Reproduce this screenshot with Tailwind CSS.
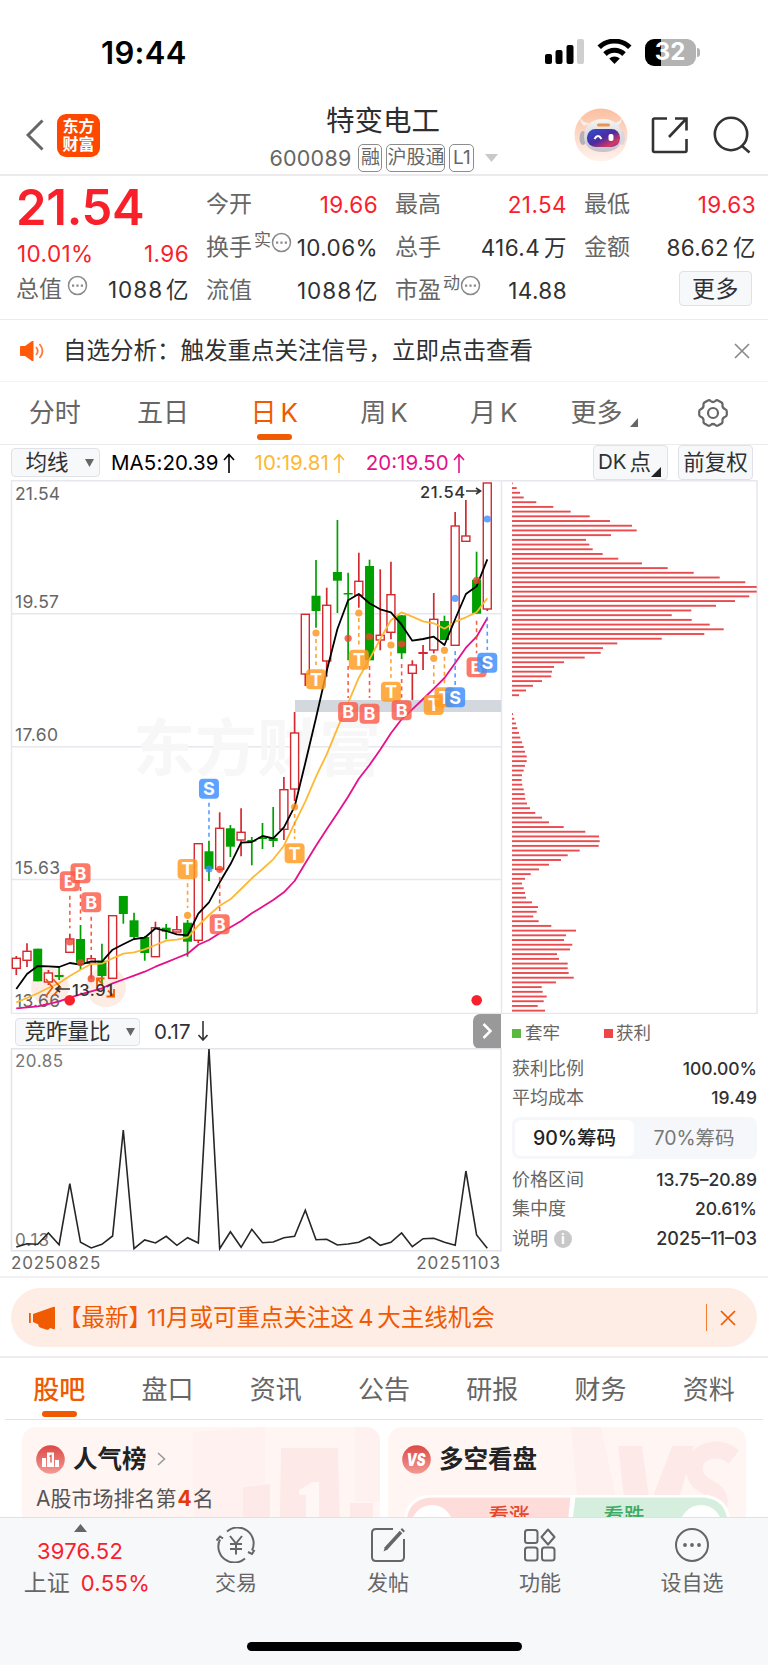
<!DOCTYPE html>
<html lang="zh-CN">
<head>
  <meta charset="UTF-8">
  <meta name="viewport" content="width=device-width, initial-scale=1.0">
  <script src="https://cdn.jsdelivr.net/npm/@tailwindcss/browser@4"></script>
  <title>特变电工 600089</title>
</head>
<body class="bg-white">
  <div class="w-[768px] h-[1665px] overflow-hidden flex flex-col bg-white text-[#303133] font-['Inter','Noto_Sans_CJK_SC',sans-serif]">

    <!-- Status bar -->
    <div class="h-[104px] shrink-0 flex items-center justify-between pl-[101px] pr-[68px]">
      <span class="text-[31px] leading-none font-semibold text-black tracking-[0.3px]">19:44</span>
      <div class="flex items-center gap-[13px]">
        <svg class="w-[39px] h-[26px]" viewBox="0 0 39 26">
          <rect x="0" y="15" width="7" height="10" rx="2"/>
          <rect x="10.500" y="11" width="7" height="14" rx="2"/>
          <rect x="21.500" y="6" width="7" height="19" rx="2"/>
          <rect x="32" y="0" width="7" height="25" rx="2" fill="#cfcfcf"/>
        </svg>
        <svg class="w-[35px] h-[26px]" viewBox="0 0 35 26" fill="none" stroke="#000" stroke-width="5">
          <path d="M2.200 8.300a22 22 0 0 1 30.600 0"/>
          <path d="M8 15.100a13.600 13.600 0 0 1 19 0"/>
          <path d="M17.500 25l-5.300-5.400a7.600 7.600 0 0 1 10.600 0z" fill="#000" stroke="none"/>
        </svg>
        <div class="flex items-center gap-[1.500px]">
          <div class="w-[51px] h-[27px] rounded-[9px] flex items-center justify-center bg-linear-to-r from-black from-32% to-[#b3b3b3] to-32%">
            <span class="text-[24px] leading-none font-bold text-white">32</span>
          </div>
          <div class="w-[3px] h-[9px] rounded-r-full bg-[#b3b3b3]"></div>
        </div>
      </div>
    </div>

    <!-- Header -->
    <header class="h-[72px] shrink-0 flex justify-between border-b-2 border-[#ebebed]">
      <div class="flex items-center w-[250px] pl-[26px] gap-[13px] pb-[8px]">
        <svg class="w-[18px] h-[32px]" viewBox="0 0 18 32" fill="none" stroke="#666" stroke-width="3"><path d="M16.500 1.500L2 16l14.500 14.500"/></svg>
        <div class="w-[43px] h-[43px] rounded-[9px] bg-[#fe4800] text-white text-[16px] leading-[18px] font-bold flex flex-col items-center justify-center">
          <span>东方</span><span>财富</span>
        </div>
      </div>
      <div class="w-[268px] flex flex-col items-center pt-px">
        <h1 class="text-[28.500px] leading-[32px] text-[#2e2e2e] -ml-[2px]">特变电工</h1>
        <div class="flex items-center mt-[7px] text-[#666]">
          <span class="text-[21.500px] leading-[28px] mr-[7px] tracking-[0.200px]">600089</span>
          <div class="flex gap-[4px] text-[19px] leading-[26px]">
            <span class="border border-[#8c8c8c] rounded-[5px] w-[24px] flex justify-center">融</span>
            <span class="border border-[#8c8c8c] rounded-[5px] w-[59px] flex justify-center">沪股通</span>
            <span class="border border-[#8c8c8c] rounded-[5px] w-[25px] flex justify-center">L1</span>
          </div>
          <svg class="w-[13px] h-[8px] ml-[11px]" viewBox="0 0 13 8"><path d="M0 0h13L6.500 8z" fill="#c9c9c9"/></svg>
        </div>
      </div>
      <div class="w-[250px] flex items-center justify-end pr-[17px] pb-[8px]">
        <svg class="w-[54px] h-[54px] mr-[23px]" viewBox="0 0 54 54">
          <defs>
            <linearGradient id="halo" x1="0" y1="0" x2="0" y2="1"><stop offset="0" stop-color="#fcbfa0"/><stop offset="1" stop-color="#fff3ee"/></linearGradient>
            <linearGradient id="visor" x1="0" y1="0" x2="1" y2="1"><stop offset="0" stop-color="#2d50d2"/><stop offset=".5" stop-color="#4c2ba0"/><stop offset=".8" stop-color="#d8395f"/><stop offset="1" stop-color="#5a38c8"/></linearGradient>
            <linearGradient id="shell" x1="0" y1="0" x2="0" y2="1"><stop offset="0" stop-color="#f7f4f4"/><stop offset="1" stop-color="#c3c1cc"/></linearGradient>
          </defs>
          <circle cx="27" cy="27" r="26.500" fill="url(#halo)"/>
          <path d="M6 9q0 7 5 9l5-3q-8 0-10-6zM48 9q0 7-5 9l-5-3q8 0 10-6z" fill="#f3efef"/>
          <ellipse cx="9" cy="30" rx="3.500" ry="7" fill="#b3b0b8"/>
          <ellipse cx="48" cy="30" rx="3" ry="7" fill="#d9d6dc"/>
          <path d="M29 11c13 0 19 8 19 18 0 9-7 15-19 15S10 38 10 29c0-10 6-18 19-18z" fill="url(#shell)"/>
          <rect x="13" y="21" width="33" height="18" rx="8.500" fill="url(#visor)"/>
          <rect x="23" y="15.500" width="13" height="3" rx="1.500" fill="#e8954e"/>
          <path d="M20.500 31q3.500-6 7 0" fill="none" stroke="#fff" stroke-width="2"/>
          <rect x="34.500" y="26" width="5" height="7" rx="2" fill="#fff"/>
        </svg>
        <svg class="w-[38px] h-[38px] mr-[24px]" viewBox="0 0 38 38" fill="none" stroke="#333" stroke-width="2.600">
          <path d="M16 2.500H3.500Q2 2.500 2 4v30.500Q2 36 3.500 36H34q1.500 0 1.500-1.500V23"/>
          <path d="M24 2.500h11.500v12M35 3L18 21"/>
        </svg>
        <svg class="w-[38px] h-[38px]" viewBox="0 0 38 38" fill="none" stroke="#333" stroke-width="2.600">
          <circle cx="18" cy="18" r="16.200"/><path d="M29 30l7.500 6.500"/>
        </svg>
      </div>
    </header>

    <!-- Quote figures -->
    <section class="h-[144px] shrink-0 border-b border-[#ebebed] flex gap-[17px] pl-[17px] pr-[11px] text-[22.500px] leading-[43px] tracking-[0.400px]">
      <div class="w-[172px]">
        <div class="text-[49px] leading-[49px] pt-[7px] h-[62px] font-semibold text-[#f8212b] tracking-[-0.300px] -ml-px">21.54</div>
        <div class="flex justify-between leading-[31px] text-[#f8212b] h-[31px]"><span>10.01%</span><span>1.96</span></div>
        <div class="flex justify-between h-[43px] -mt-px">
          <span class="flex text-[23px] tracking-normal text-[#666] -ml-px">总值<svg class="w-[21px] h-[21px] ml-[5px] mt-[7px]" viewBox="0 0 21 21"><circle cx="10.500" cy="10.500" r="9" fill="none" stroke="#8a8a8a" stroke-width="1.500"/><path d="M5 9.500h2.200v2.200H5zM9.400 9.500h2.200v2.200H9.400zM13.800 9.500H16v2.200h-2.200z" fill="#8a8a8a"/></svg></span>
          <span class="flex gap-[3px]"><span class="tracking-[1px]">1088</span><span>亿</span></span>
        </div>
      </div>
      <div class="w-[172px] pt-[7px]">
        <div class="flex justify-between h-[43px]"><span class="text-[23px] tracking-normal text-[#666]">今开</span><span class="text-[#f8212b]">19.66</span></div>
        <div class="flex justify-between h-[43px]">
          <span class="flex text-[23px] tracking-normal text-[#666]">换手<span class="text-[17px] leading-[28px] ml-[2px]">实</span><svg class="w-[21px] h-[21px] mt-[6px]" viewBox="0 0 21 21"><circle cx="10.500" cy="10.500" r="9" fill="none" stroke="#8a8a8a" stroke-width="1.500"/><path d="M5 9.500h2.200v2.200H5zM9.400 9.500h2.200v2.200H9.400zM13.800 9.500H16v2.200h-2.200z" fill="#8a8a8a"/></svg></span>
          <span>10.06%</span>
        </div>
        <div class="flex justify-between h-[43px]"><span class="text-[23px] tracking-normal text-[#666]">流值</span><span class="flex gap-[3px]"><span class="tracking-[1px]">1088</span><span>亿</span></span></div>
      </div>
      <div class="w-[172px] pt-[7px]">
        <div class="flex justify-between h-[43px]"><span class="text-[23px] tracking-normal text-[#666]">最高</span><span class="text-[#f8212b]">21.54</span></div>
        <div class="flex justify-between h-[43px]"><span class="text-[23px] tracking-normal text-[#666]">总手</span><span class="flex gap-[4px]">416.4<span>万</span></span></div>
        <div class="flex justify-between h-[43px]">
          <span class="flex text-[23px] tracking-normal text-[#666]">市盈<span class="text-[17px] leading-[28px] ml-[2px]">动</span><svg class="w-[21px] h-[21px] mt-[6px]" viewBox="0 0 21 21"><circle cx="10.500" cy="10.500" r="9" fill="none" stroke="#8a8a8a" stroke-width="1.500"/><path d="M5 9.500h2.200v2.200H5zM9.400 9.500h2.200v2.200H9.400zM13.800 9.500H16v2.200h-2.200z" fill="#8a8a8a"/></svg></span>
          <span>14.88</span>
        </div>
      </div>
      <div class="w-[172px] pt-[7px]">
        <div class="flex justify-between h-[43px]"><span class="text-[23px] tracking-normal text-[#666]">最低</span><span class="text-[#f8212b]">19.63</span></div>
        <div class="flex justify-between h-[43px]"><span class="text-[23px] tracking-normal text-[#666]">金额</span><span class="flex gap-[4px]">86.62<span>亿</span></span></div>
        <div class="flex justify-end pt-[2px] pr-[4px]"><button class="w-[73px] h-[35px] border border-[#dfe1e6] rounded-[4px] bg-[#f7f8fa] text-[23px] leading-[32px]">更多</button></div>
      </div>
    </section>

    <!-- Analysis notice -->
    <section class="h-[62px] shrink-0 flex items-center pl-[20px] pr-[18px] border-b border-[#f4f4f5]">
      <svg class="w-[24px] h-[20px]" viewBox="0 0 24 20">
        <path d="M0 6q0-1 1-1h4l7-5q1.500-.5 1.500 1v18q0 1.500-1.500 1l-7-5H1q-1 0-1-1z" fill="#ff5a0a"/>
        <path d="M16 6q3.500 4 0 8M19.500 3q6 7 0 14" fill="none" stroke="#ff7a3a" stroke-width="1.800"/>
      </svg>
      <span class="text-[23.500px] leading-none ml-[19px] flex-1">自选分析：触发重点关注信号，立即点击查看</span>
      <svg class="w-[16px] h-[16px]" viewBox="0 0 16 16" stroke="#8a8a8a" stroke-width="1.700"><path d="M1 1l14 14M15 1L1 15"/></svg>
    </section>

    <!-- Period tabs -->
    <nav class="h-[63px] shrink-0 grid grid-cols-7 border-b border-[#ebebed] text-[26px] leading-[62px] text-[#666] text-center">
      <span>分时</span>
      <span class="-ml-[3px]">五日</span>
      <span class="relative flex justify-center gap-[4px] text-[#f05a00]">日<span>K</span><i class="absolute left-[38px] top-[52px] w-[35px] h-[5.500px] rounded-full bg-[#f05a00]"></i></span>
      <span class="flex justify-center gap-[4px]">周<span>K</span></span>
      <span class="flex justify-center gap-[4px]">月<span>K</span></span>
      <span class="flex justify-center items-center gap-[8px] pl-[2px]">更多<svg class="w-[8px] h-[9px] mt-[19px]" viewBox="0 0 8 9"><path d="M8 0v9H0z" fill="#666"/></svg></span>
      <span class="flex justify-center items-center">
        <svg class="w-[30px] h-[28px]" viewBox="0 0 30 28" fill="none" stroke="#666" stroke-width="2.200">
          <path d="M10 1.500q1.500-.7 2.600.5 2.400 2 4.800 0Q18.500.8 20 1.500l3.600 2q1.200.9.900 2.500-.4 3 2.800 4.200 1.500.6 1.500 2v3.600q0 1.400-1.500 2-3.200 1.200-2.800 4.200.3 1.600-.9 2.500l-3.600 2q-1.500.7-2.600-.5-2.400-2-4.800 0-1.100 1.200-2.600.5l-3.600-2Q5.200 23.600 5.500 22q.4-3-2.800-4.200-1.500-.6-1.500-2v-3.600q0-1.400 1.500-2Q5.900 9 5.500 6q-.3-1.600.9-2.500z"/>
          <circle cx="15" cy="14" r="5"/>
        </svg>
      </span>
    </nav>

    <!-- MA legend -->
    <div class="h-[35px] shrink-0 flex items-center pl-[11px] pr-[15px] text-[20.500px] leading-none">
      <div class="w-[89px] h-[29px] border border-[#dfe2e8] rounded-[4px] bg-[#f7f8fa] flex items-center justify-center gap-[16px] pl-[8px]"><span class="text-[21.500px]">均线</span><svg class="w-[9px] h-[8px]" viewBox="0 0 9 8"><path d="M0 0h9L4.500 8z" fill="#666"/></svg></div>
      <div class="flex items-center gap-[4px] ml-[11px] pt-[2px] text-black tracking-[0.100px]">MA5:20.39<svg class="w-[12px] h-[20px] -mt-[2px]" viewBox="0 0 12 20" fill="none" stroke="currentColor" stroke-width="1.600"><path d="M6 20V1.500M1 7l5-5.500L11 7"/></svg></div>
      <div class="flex items-center gap-[4px] ml-[20px] pt-[2px] text-[#fdb935]">10:19.81<svg class="w-[12px] h-[20px] -mt-[2px]" viewBox="0 0 12 20" fill="none" stroke="currentColor" stroke-width="1.600"><path d="M6 20V1.500M1 7l5-5.500L11 7"/></svg></div>
      <div class="flex items-center gap-[4px] ml-[21px] pt-[2px] text-[#e5108c]">20:19.50<svg class="w-[12px] h-[20px] -mt-[2px]" viewBox="0 0 12 20" fill="none" stroke="currentColor" stroke-width="1.600"><path d="M6 20V1.500M1 7l5-5.500L11 7"/></svg></div>
      <div class="ml-auto flex gap-[10px]">
        <div class="w-[75px] h-[35px] border border-[#dfe2e8] rounded-[4px] bg-[#f7f8fa] flex items-center pl-[4px] gap-[3px]">DK<span class="text-[21.500px]">点</span><svg class="w-[10px] h-[10px] mt-[18px] -ml-[3px]" viewBox="0 0 10 10"><path d="M10 0v10H0z" fill="#222"/></svg></div>
        <div class="w-[75px] h-[35px] border border-[#dfe2e8] rounded-[4px] bg-[#f7f8fa] flex items-center justify-center text-[21.500px]">前复权</div>
      </div>
    </div>

    <!-- Candles and chip distribution, drawn in page coordinates -->
    <svg id="kline" class="w-[768px] h-[534px] shrink-0" viewBox="0 480 768 534">
      <g fill="none" stroke="#e6e8ee" stroke-width="1.500">
        <path d="M11.500 1013.500V480.700H757V1013.500zM501.500 480v534M12 613.800h489M12 746.700h489M12 879.500h489"/>
      </g>
      <text x="133" y="771" class="text-[62px] font-bold" fill="#f7f7f7" textLength="248">东方财富</text>
      <rect x="295" y="700" width="206" height="12" fill="#d3d7de"/>
      <g class="text-[17.500px]" fill="#666">
        <text x="15" y="499.500" textLength="45">21.54</text>
        <text x="15" y="608" textLength="44">19.57</text>
        <text x="15" y="740.700" textLength="43">17.60</text>
        <text x="15" y="874" textLength="45">15.63</text>
      </g>
      <circle cx="50" cy="987" r="19" fill="#fdece3"/>
      <circle cx="106" cy="987" r="20" fill="#fdece3"/>
      <text x="15" y="1007" class="text-[17.500px]" fill="#666" textLength="45">13.66</text>
      <g id="candles"></g>
      <g id="averages" fill="none" stroke-width="1.800" stroke-linejoin="round"></g>
      <g id="signals"></g>
      <g fill="none" stroke="#f05a00" stroke-width="1.800">
        <path d="M46 979l6.500 8.500-6.500 8.500M53 979l7.500 8.500-7.500 8.500"/>
        <path d="M97 986v-7.500h7.500M97 978.500l6 6M114 989v7.500h-7.500M114 996.500l-6-6"/>
      </g>
      <circle cx="69.700" cy="1000.300" r="5.300" fill="#f8212b"/>
      <circle cx="476.700" cy="1000.300" r="5.300" fill="#f8212b"/>
      <g fill="none" stroke="#333" stroke-width="1.600">
        <path d="M70 989H56M60 986l-4 3 4 3"/>
        <path d="M466 491h14M476 488l4.500 3-4.500 3"/>
      </g>
      <g class="text-[16.500px] font-medium" fill="#333">
        <text x="72" y="996" textLength="41">13.91</text>
        <text x="420" y="497.500" textLength="45">21.54</text>
      </g>
      <g id="chips" fill="#ea4b4e"></g>
    </svg>

    <div class="flex h-[264px] shrink-0 border-b-2 border-[#f1f1f3]">
      <!-- Auction volume ratio -->
      <div class="w-[501px] flex flex-col">
        <div class="h-[34px] flex items-center pl-[15px]">
          <div class="w-[125px] h-[28px] mt-px border border-[#dfe2e8] rounded-[4px] bg-[#f7f8fa] flex items-center justify-center gap-[15px] text-[21.500px] leading-none pl-[4px]">竞昨量比<svg class="w-[9px] h-[8px]" viewBox="0 0 9 8"><path d="M0 0h9L4.500 8z" fill="#666"/></svg></div>
          <span class="ml-[14px] mt-[2px] text-[20.500px] leading-none">0.17</span>
          <svg class="w-[10px] h-[20px] ml-[7px]" viewBox="0 0 10 20" fill="none" stroke="#333" stroke-width="1.600"><path d="M5 0v18.500M.5 14L5 19l4.500-5"/></svg>
          <div class="ml-auto w-[28px] h-[35px] rounded-l-[7px] bg-[#999] flex items-center justify-center">
            <svg class="w-[10px] h-[16px]" viewBox="0 0 10 16" fill="none" stroke="#fff" stroke-width="2.500"><path d="M1.500 1l7 7-7 7"/></svg>
          </div>
        </div>
        <svg class="w-[502px] h-[204px]" viewBox="0 1048 502 204">
          <path d="M11.500 1250.700V1048.700H501V1250.700z" fill="none" stroke="#e3e3ea" stroke-width="1.500"/>
          <g class="text-[17px]" fill="#777">
            <text x="15" y="1066.500" textLength="48">20.85</text>
            <text x="15" y="1246" textLength="34">0.13</text>
          </g>
          <polyline id="ratio" fill="none" stroke="#262626" stroke-width="1.600"/>
        </svg>
        <div class="flex justify-between pl-[11px] text-[17px] leading-[22px] text-[#666] tracking-[0.800px]"><span>20250825</span><span class="tracking-[1px]">20251103</span></div>
      </div>

      <!-- Chip summary -->
      <div class="flex-1 pl-[11px] pr-[11px] pt-[6px] text-[18px] text-[#666] leading-[28px]">
        <div class="flex items-center h-[26px] text-[17.500px]">
          <i class="w-[9px] h-[9px] bg-[#5cb93f] mr-[4px]"></i><span class="w-[79px]">套牢</span>
          <i class="w-[9px] h-[9px] bg-[#ee4548] mr-[3px]"></i><span>获利</span>
        </div>
        <div class="flex justify-between items-center h-[29px] mt-[8px]"><span>获利比例</span><span class="font-medium text-[17.500px] text-[#303133]">100.00%</span></div>
        <div class="flex justify-between items-center h-[29px]"><span>平均成本</span><span class="font-medium text-[17.500px] text-[#303133]">19.49</span></div>
        <div class="h-[42px] mt-[5px] rounded-[8px] bg-[#f6f7fa] flex p-[3px] text-[19.500px] leading-[37px] text-center">
          <span class="w-[119px] rounded-[6px] bg-white font-medium text-[#222]">90%筹码</span>
          <span class="flex-1 text-[#777]">70%筹码</span>
        </div>
        <div class="flex justify-between items-center h-[29px] mt-[6px]"><span>价格区间</span><span class="font-medium text-[17.500px] text-[#303133]">13.75–20.89</span></div>
        <div class="flex justify-between items-center h-[29px]"><span>集中度</span><span class="font-medium text-[17.500px] text-[#303133]">20.61%</span></div>
        <div class="flex justify-between items-center h-[31px]">
          <span class="flex items-center gap-[6px]">说明<i class="w-[18px] h-[18px] rounded-full bg-[#c8c8c8] text-white text-[14px] leading-[18px] text-center not-italic font-bold">i</i></span>
          <span class="font-medium text-[18px] text-[#303133]">2025–11–03</span>
        </div>
      </div>
    </div>

    <!-- News banner -->
    <div class="h-[80px] shrink-0 border-b-2 border-[#ededef] px-[11px] pt-[10px]">
      <div class="h-[59px] rounded-full bg-[#fdede4] flex items-center pl-[17px] pr-[21px] text-[#f05a00]">
        <svg class="w-[28px] h-[24px]" viewBox="0 0 28 24" fill="#f05a00"><path d="M1 7h1.800v10H1zM5 8l20-7q2-1 2 1v20q0 2-2 1l-3-1q-1 2.500-4 1.500l-6-2q-2-.8-1.500-3L5 16z"/></svg>
        <span class="text-[23.500px] leading-none flex items-center flex-1 ml-[6px]"><span class="-ml-[4px]">【</span>最新<span class="-mr-[5px]">】</span><span class="flex gap-[4px]"><span>11月或可重点关注这</span><span>4</span><span>大主线机会</span></span></span>
        <i class="w-[1.500px] h-[27px] bg-[#f27a33] mr-[13px]"></i>
        <svg class="w-[16px] h-[16px]" viewBox="0 0 16 16" stroke="#f05a00" stroke-width="1.700"><path d="M1 1l14 14M15 1L1 15"/></svg>
      </div>
    </div>

    <!-- Section tabs -->
    <nav class="h-[62px] shrink-0 mx-[5px] grid grid-cols-7 border-b border-[#e4e4e6] text-[26px] leading-[63px] text-center text-[#666]">
      <span class="relative text-[#f05a00] font-medium">股吧<i class="absolute left-[37px] top-[53px] w-[35px] h-[5.500px] rounded-full bg-[#f05a00]"></i></span>
      <span>盘口</span>
      <span>资讯</span>
      <span>公告</span>
      <span>研报</span>
      <span>财务</span>
      <span>资料</span>
    </nav>

    <!-- Cards, cut off by the bottom bar -->
    <div class="h-[97px] shrink-0 overflow-hidden flex gap-[8px] pl-[22px] pt-[7px]">
      <div class="relative w-[358px] h-[140px] rounded-[14px] bg-[#fff6f4] overflow-hidden">
        <svg class="absolute inset-0 w-[358px] h-[140px]" viewBox="0 0 358 140" fill="#fdeae8">
          <path d="M171 5L243 0v57l-22 2v70H171zM333 0h25v75h-25z" opacity=".45"/>
          <path d="M221 60l27-3v83h-27zM259 21h57l3 119h-62zM328 76h23v64h-23z"/>
          <path d="M277 63l14-8h6v85h-13V68h-7z" fill="#fff7f5"/>
        </svg>
        <div class="relative pl-[14px] pt-[17px]">
          <div class="flex items-center h-[30px]">
            <svg class="w-[29px] h-[29px]" viewBox="0 0 29 29">
              <defs><linearGradient id="badge" x1="0" y1="0" x2="0" y2="1"><stop offset="0" stop-color="#db4946"/><stop offset="1" stop-color="#f39a94"/></linearGradient></defs>
              <circle cx="14.500" cy="14.500" r="14.300" fill="url(#badge)"/>
              <path d="M6 13h4v9H6zM11 7.500h7V22h-7zM19 15h4v7h-4z" fill="#fff"/>
              <path d="M13.500 11.500l1.500-1v7" stroke="#df5753" stroke-width="1.400" fill="none"/>
            </svg>
            <span class="text-[24.500px] leading-none font-bold text-[#222] ml-[8px]">人气榜</span>
            <svg class="w-[9px] h-[14px] ml-[10px]" viewBox="0 0 9 14" fill="none" stroke="#999" stroke-width="1.600"><path d="M1 1l6.500 6L1 13"/></svg>
          </div>
          <div class="text-[21px] leading-[30px] mt-[10px] text-[#555] flex">A股市场排名第<b class="text-[#e8380d] mx-px">4</b>名</div>
        </div>
      </div>
      <div class="relative w-[358px] h-[140px] rounded-[14px] bg-[#fff6f4] overflow-hidden">
        <svg class="absolute inset-0 w-[358px] h-[140px]" viewBox="0 0 358 140" fill="#fdeae8">
          <path d="M183 0h30l14 66v40h-34z" opacity=".5"/>
          <path d="M230 19h24l8 58 22-58h22l-34 121h-28z"/>
          <path d="M346 30q-14-11-28-5t-11 22q2 8 14 14t10 18q-4 12-24 4" fill="none" stroke="#fdeae8" stroke-width="17"/>
        </svg>
        <div class="relative pl-[14px] pt-[17px]">
          <div class="flex items-center h-[30px]">
            <svg class="w-[29px] h-[29px]" viewBox="0 0 29 29">
              <circle cx="14.500" cy="14.500" r="14.300" fill="url(#badge)"/>
              <text x="14" y="20.500" text-anchor="middle" class="text-[17px] font-black italic" fill="#fff" textLength="19" lengthAdjust="spacingAndGlyphs">VS</text>
            </svg>
            <span class="text-[24.500px] leading-none font-bold text-[#222] ml-[8px]">多空看盘</span>
          </div>
        </div>
        <svg class="absolute left-[16px] top-[68px] w-[326px] h-[60px]" viewBox="0 0 326 60">
          <path d="M30 1H168l-6 59H1V30Q1 1 30 1z" fill="#fddcd9" stroke="#fff" stroke-width="3"/>
          <path d="M170 1H296Q325 1 325 30v30H163z" fill="#d5eedd" stroke="#fff" stroke-width="3"/>
          <circle cx="28" cy="31" r="21" fill="#fff"/>
          <circle cx="297" cy="31" r="21" fill="#fff"/>
          <text x="105" y="28" text-anchor="middle" class="text-[20.500px] font-medium" fill="#e8462a">看涨</text>
          <text x="220" y="28" text-anchor="middle" class="text-[20.500px] font-medium" fill="#3cab66">看跌</text>
        </svg>
      </div>
    </div>

    <!-- Bottom bar -->
    <footer class="flex-1 bg-[#f7f8fa] border-t border-[#dfe1e6] flex flex-col justify-between items-center pb-[14px]">
      <div class="w-full flex text-[21px] leading-[30px] text-[#666] text-center">
        <div class="w-[160px] pt-[6px] flex flex-col items-center">
          <svg class="w-[13px] h-[8px]" viewBox="0 0 13 8"><path d="M6.500 0L13 8H0z" fill="#666"/></svg>
          <span class="text-[#f8212b] text-[22px] mt-[4px] tracking-[0.200px]">3976.52</span>
          <span class="flex gap-[11px] mt-[2px] pl-[14px]"><span class="text-[23px]">上证</span><span class="text-[#f8212b] text-[22px] tracking-[0.400px]">0.55%</span></span>
        </div>
        <div class="w-[152px] pt-[9px] flex flex-col items-center">
          <svg class="w-[40px] h-[36px]" viewBox="0 0 40 36" fill="none" stroke="#666" stroke-width="2">
            <path d="M11 4.500A16 16 0 0 1 36 23.500M38.500 23l-2.500 4-4-2"/>
            <path d="M29 31.500A16 16 0 0 1 4 12.500M.5 13.500l3.500-4 3 2"/>
            <path d="M14 9l6 7.500L26 9M20 16.500v11M14 17h12M14 22h12"/>
          </svg>
          <span class="mt-[5px]">交易</span>
        </div>
        <div class="w-[152px] pt-[9px] flex flex-col items-center">
          <svg class="w-[36px] h-[36px]" viewBox="0 0 36 36" fill="none" stroke="#666" stroke-width="2">
            <path d="M23 2H6Q2 2 2 6v24q0 4 4 4h24q4 0 4-4V12"/>
            <path d="M31 5L15.500 22" stroke-width="3.500"/><path d="M32 4l1.500-1.500" stroke-width="4"/><path d="M15 20l-1.500 4.500 4-2z" fill="#666" stroke="none"/>
          </svg>
          <span class="mt-[5px]">发帖</span>
        </div>
        <div class="w-[152px] pt-[9px] flex flex-col items-center">
          <svg class="w-[34px] h-[36px]" viewBox="0 0 34 36" fill="none" stroke="#666" stroke-width="2">
            <rect x="2" y="3" width="12.500" height="13" rx="2.500"/>
            <path d="M25 2.500l6.500 7.500-6.500 7.500-6.500-7.500z" stroke-linejoin="round"/>
            <rect x="2" y="20.500" width="12.500" height="13" rx="2.500"/>
            <rect x="19" y="20.500" width="12.500" height="13" rx="2.500"/>
          </svg>
          <span class="mt-[5px]">功能</span>
        </div>
        <div class="w-[152px] pt-[9px] flex flex-col items-center">
          <svg class="w-[36px] h-[36px]" viewBox="0 0 36 36">
            <circle cx="18" cy="18" r="16" fill="none" stroke="#666" stroke-width="2"/>
            <circle cx="11" cy="18" r="1.900" fill="#666"/><circle cx="18" cy="18" r="1.900" fill="#666"/><circle cx="25" cy="18" r="1.900" fill="#666"/>
          </svg>
          <span class="mt-[5px]">设自选</span>
        </div>
      </div>
      <div class="w-[275px] h-[9.500px] rounded-full bg-black"></div>
    </footer>
  </div>

  <script>
    const x = (i) => 16.3 + i * 10.704;

    // [up, high, body top, body bottom, low]
    const candles = [
      [1,956,958.3,968.3,975],[1,943.3,951.3,960.3,967],[0,948.7,948.7,981.3,981.3],[1,970,973,982,985],[0,966.7,975,977,980],
      [1,933.7,939,952.3,952.3],[0,925,939,962.7,970],[1,955,958.7,963.3,978.7],[0,943.7,960.7,976,985],[1,915,915.7,978.3,978.3],
      [0,896,896,914,923.7],[0,912.7,920.3,937,940],[0,936,937,953,960.7],[1,921.7,927.7,956.7,957],[0,924,927.7,931.7,939.3],
      [1,916,929.8,932,932.3],[0,920,922.7,941.7,956.7],[1,843.7,843.7,940.3,943.3],[0,840.7,851.3,869,881],[1,812.3,828.3,869.3,870.7],
      [0,825,828.3,846.7,857],[1,808.3,832.3,840,856.3],[0,837,840,841.5,865.3],[0,823,837.5,839,849],[0,807,838,841,847],
      [1,777,789.7,829.3,840],[1,712,733,789,801],[1,614,614.3,674,686],[0,560,595.7,611,627.7],[1,587.7,605.3,661,676.7],
      [0,520,572,580.7,613],[0,572.7,593,594.5,660.3],[1,552.7,581.3,595.3,607.7],[0,559.7,566,660.3,660.3],[1,569.3,635.3,640,650.3],
      [1,561.7,594.7,632.3,639.3],[0,615,615.3,653.3,659],[1,660.3,665,673.3,700],[1,645,652.7,653.3,670],[1,593,619.3,650,653.3],
      [0,615.7,621,640,640],[1,512,526,645.3,645.3],[1,500,536,541.3,541.3],[0,551.7,579.7,613.7,613.7],[1,483,483,609,611]
    ];
    document.getElementById('candles').innerHTML = candles.map(([up, hi, top, bot, lo], i) => {
      const color = up ? '#d3292f' : '#00a000';
      const cx = x(i);
      const body = up
        ? `<rect x="${cx - 4}" y="${top}" width="8" height="${bot - top}" fill="#fff" stroke="${color}" stroke-width="1.4"/>`
        : `<rect x="${cx - 4.5}" y="${top}" width="9" height="${bot - top}" fill="${color}"/>`;
      return `<path d="M${cx} ${hi}V${lo}" stroke="${color}" stroke-width="1.7"/>${body}`;
    }).join('');

    const averages = {
      '#fdb935': [1002.3,998,993.3,988,983,976,969.7,964,963.7,958.3,953.7,952.3,949.3,945,940.7,939.7,937.3,925.7,915,905.7,899.3,889,878.3,869,859.3,845.7,823.3,801.7,776.7,754.3,728.3,703,677.7,659.3,639,620.3,612.3,616.7,621.3,623.3,628.7,621.7,617.3,612.3,598.3],
      '#e5108c': [1008.3,1007.3,1006.3,1004,1001.3,997.7,994.3,991.3,988.3,983.3,979.5,975.7,971.7,966.7,962.3,958,953.7,944.7,940,933.3,927.3,921,913.3,906.7,900,892.3,881,863.3,845.7,829.3,813.3,796.7,778.7,765,749.7,733.3,719.3,709.3,699,688.7,678,663,647.7,636.7,618.3],
      '#000': [989,974,966,966.3,967,963,964.7,961.3,961.7,949.7,944.3,939,937.7,928.3,931,934.3,935.3,913.7,902.3,882.3,864.3,842.7,842,836,838.3,827.3,806.7,763,718,671,629,600.3,594,603.3,609.3,612.3,624.7,640.7,639,636.7,645,619,594,586.3,559.3]
    };
    document.getElementById('averages').innerHTML = Object.entries(averages).map(([color, ys]) =>
      `<polyline stroke="${color}" points="${ys.map((y, i) => x(i).toFixed(1) + ',' + y).join(' ')}"/>`).join('');

    // [index, letter, badge y, dot y, dash from, dash to]
    const signals = [
      [5,'B',881.3,942,895.7,928.3],[6,'B',873.3,962.7,887,920],[7,'B',902.3,978.7,916.7,950],[16,'T',869,915.3,883.3,908],
      [18,'S',788.7,869,802.7,836.7],[19,'B',924.3,869.3,877,911],[26,'T',853.3,807,814,839],[28,'T',679.3,633,639,665],
      [31,'B',712,638.3,666,698],[32,'T',659.7,613,618,645],[33,'B',713.7,636.7,666,698],[35,'T',691.7,645,651.7,677.7],
      [36,'B',710.3,644,664,697.7],[39,'T',705,658.3,665,684],[40,'T',697.3,650.3,656.7,685],[41,'S',697.3,598.3,651,685],
      [43,'B',667.3,580.3,620.7,653.3],[44,'S',662.7,519,616.7,650]
    ];
    const fills = { B: '#fb5a48', T: '#ff9a1f', S: '#3b8dff' };
    const dots = { B: '#f2442e', T: '#fb9316', S: '#3b8dff' };
    document.getElementById('signals').innerHTML = signals.map(([i, s, y, dot, from, to]) => {
      const cx = x(i);
      return `<path d="M${cx} ${from}V${to}" stroke="${dots[s]}" stroke-width="1.6" stroke-dasharray="4 3.5" opacity=".85"/>
        <circle cx="${cx}" cy="${dot}" r="3.6" fill="${dots[s]}" opacity=".8"/>
        <rect x="${cx - 10}" y="${y - 10}" width="20" height="20" rx="4" fill="${fills[s]}" opacity=".82"/>
        <text x="${cx}" y="${y + 6.3}" text-anchor="middle" class="text-[18px] font-bold" fill="#fff">${s}</text>`;
    }).join('');

    // Chip lengths by price level, the zeros are a gap
    const chips = [2,14,24,35,73,124,176,233,294,360,374,297,222,232,242,272,319,390,467,545,623,700,734,734,712,669,612,538,479,539,593,635,577,449,316,273,266,218,156,126,120,118,90,63,42,21,0,0,0,3,7,12,16,21,25,30,35,39,44,44,39,35,30,29,31,35,38,40,45,54,70,90,111,155,220,261,263,260,203,167,147,111,81,56,39,30,35,39,42,60,78,74,64,80,118,192,162,156,181,174,135,141,167,167,170,185,132,89,92,104,95,77,99];
    document.getElementById('chips').innerHTML = chips.map((w, i) =>
      `<rect x="512" y="${(482.4 + i * 4.708).toFixed(2)}" width="${(w / 3).toFixed(1)}" height="1.9"/>`).join('');

    const ratio = [696,686,688,654,689,506,682,699,688,663,345,701,675,684,664,691,668,684,102,701,650,697,643,683,681,668,664,586,674,673,690,687,682,666,691,682,654,695,671,670,682,691,468,660,700];
    document.getElementById('ratio').setAttribute('points', ratio.map((v, i) => x(i).toFixed(1) + ',' + (1015 + v / 3).toFixed(1)).join(' '));
  </script>
</body>
</html>
